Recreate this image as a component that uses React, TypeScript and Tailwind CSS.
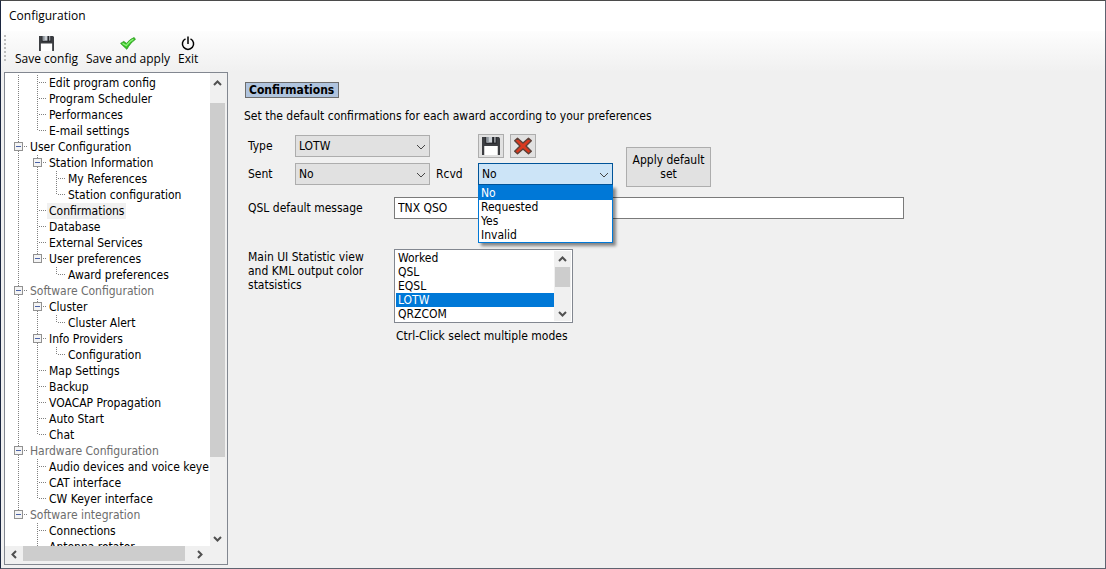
import { ReactNode } from "react";

type Guide = "line" | "tee" | "end" | "box" | "boxEnd" | "blank";

type TreeRow = {
  label: string;
  guides: Guide[];
  muted?: boolean;
  selected?: boolean;
};

const treeRows: TreeRow[] = [
  { label: "Edit program config", guides: ["line", "tee"] },
  { label: "Program Scheduler", guides: ["line", "tee"] },
  { label: "Performances", guides: ["line", "tee"] },
  { label: "E-mail settings", guides: ["line", "end"] },
  { label: "User Configuration", guides: ["box"] },
  { label: "Station Information", guides: ["line", "box"] },
  { label: "My References", guides: ["line", "line", "tee"] },
  { label: "Station configuration", guides: ["line", "line", "end"] },
  { label: "Confirmations", guides: ["line", "tee"], selected: true },
  { label: "Database", guides: ["line", "tee"] },
  { label: "External Services", guides: ["line", "tee"] },
  { label: "User preferences", guides: ["line", "boxEnd"] },
  { label: "Award preferences", guides: ["line", "blank", "end"] },
  { label: "Software Configuration", guides: ["box"], muted: true },
  { label: "Cluster", guides: ["line", "box"] },
  { label: "Cluster Alert", guides: ["line", "line", "end"] },
  { label: "Info Providers", guides: ["line", "box"] },
  { label: "Configuration", guides: ["line", "line", "end"] },
  { label: "Map Settings", guides: ["line", "tee"] },
  { label: "Backup", guides: ["line", "tee"] },
  { label: "VOACAP Propagation", guides: ["line", "tee"] },
  { label: "Auto Start", guides: ["line", "tee"] },
  { label: "Chat", guides: ["line", "end"] },
  { label: "Hardware Configuration", guides: ["box"], muted: true },
  { label: "Audio devices and voice keye", guides: ["line", "tee"] },
  { label: "CAT interface", guides: ["line", "tee"] },
  { label: "CW Keyer interface", guides: ["line", "end"] },
  { label: "Software integration", guides: ["boxEnd"], muted: true },
  { label: "Connections", guides: ["blank", "tee"] },
  { label: "Antenna rotator", guides: ["blank", "tee"] },
];

const GuideCell = ({ type }: { type: Guide }) => {
  const isBox = type === "box" || type === "boxEnd";
  const toBottom = type === "line" || type === "tee" || type === "box";
  return (
    <svg width="19" height="16" className="shrink-0" shapeRendering="crispEdges">
      <g stroke="#808080" strokeDasharray="1 1">
        {type !== "blank" && (
          <path d={toBottom ? "M9.5 0V16" : "M9.5 0V8"} />
        )}
        {type !== "blank" && type !== "line" && <path d="M11 7.5H18" />}
      </g>
      {isBox && (
        <g>
          <rect x="5.5" y="3.5" width="8" height="8" fill="#f4f4f4" stroke="#919191" />
          <path d="M7 7.5H12" stroke="#4b63a7" />
        </g>
      )}
    </svg>
  );
};

type Direction = "up" | "down" | "left" | "right";

const arrows: Record<Direction, string> = {
  up: "M1 6L4.5 2.5L8 6",
  down: "M1 3L4.5 6.5L8 3",
  left: "M6 1L2.5 4.5L6 8",
  right: "M3 1L6.5 4.5L3 8",
};

const ScrollArrow = ({ direction }: { direction: Direction }) => (
  <button
    type="button"
    aria-label={`Scroll ${direction}`}
    className="flex h-4 w-[15px] shrink-0 items-center justify-center"
  >
    <svg width="9" height="9" fill="none" stroke="#505050" strokeWidth="2">
      <path d={arrows[direction]} />
    </svg>
  </button>
);

const FloppyIcon = ({ size }: { size: number }) => (
  <svg width={size} height={size} viewBox="0 0 16 16">
    <path d="M0 0H15L16 1V16H0Z" fill="#3c3e42" />
    <rect x="3" y="0" width="10" height="6" fill="#23252a" />
    <rect x="4" y="0" width="5" height="5" fill="#c9ced3" />
    <rect x="4" y="0" width="2" height="5" fill="#8f969d" />
    <rect x="11" y="0" width="1" height="5" fill="#c9ced3" />
    <rect x="2" y="8" width="12" height="8" fill="#fff" />
  </svg>
);

const CheckIcon = () => (
  <svg width="16" height="13" viewBox="0 0 16 13">
    <path
      d="M0.6 6.4L3.8 4.4L6.5 6.4C8.5 4 11 1.8 14.2 0.6L15.4 2.4C12 4.6 9.3 8 6.8 12.3Z"
      fill="#35c322"
      stroke="#2b9420"
      strokeWidth="0.8"
    />
    <path
      d="M2.5 6.3L6.3 8.6C8.5 5.6 10.5 3.7 13.4 2.2"
      fill="none"
      stroke="#8cf07a"
      strokeWidth="1.4"
    />
  </svg>
);

const PowerIcon = () => (
  <svg width="14" height="15" viewBox="0 0 14 15" fill="none" stroke="#000" strokeWidth="1.5">
    <path d="M4.5 2.8A5.6 5.6 0 1 0 9.5 2.8M7 0.5V8" />
  </svg>
);

const CrossIcon = () => (
  <svg width="20" height="18" viewBox="0 0 20 18" fill="none" strokeLinejoin="round">
    <path
      d="M4.5 1.2L10 6L15.5 1.2L18.3 3.8L13 9L18.3 14.2L15.5 16.8L10 12L4.5 16.8L1.7 14.2L7 9L1.7 3.8Z"
      fill="#d9391f"
      stroke="#5b4038"
      strokeWidth="1.4"
    />
  </svg>
);

const ToolButton = ({ icon, label }: { icon: ReactNode; label: string }) => (
  <button type="button" className="flex flex-col items-center">
    <span className="flex h-4 items-center">{icon}</span>
    <span className="leading-4">{label}</span>
  </button>
);

type ComboProps = {
  id: string;
  options: string[];
  open?: boolean;
};

const Combo = ({ id, options, open }: ComboProps) => (
  <div className="relative w-[135px]">
    <select
      id={id}
      className={`block h-[22px] w-full appearance-none border pl-[3px] ${
        open ? "border-[#005499] bg-[#cce4f7]" : "border-[#adadad] bg-[#e1e1e1]"
      }`}
    >
      {options.map((option) => (
        <option key={option}>{option}</option>
      ))}
    </select>
    <svg
      width="10"
      height="6"
      className="pointer-events-none absolute top-[9px] right-1"
      fill="none"
      stroke="#444"
    >
      <path d="M1 1L5 5L9 1" />
    </svg>
    {open && (
      <ul
        role="listbox"
        className="absolute top-full left-0 z-10 w-full border border-[#0078d7] bg-white leading-[14px] shadow-[3px_3px_3px_rgba(0,0,0,0.45)]"
      >
        {options.map((option, i) => (
          <li
            key={option}
            role="option"
            aria-selected={i === 0}
            className={`px-[2px] ${i === 0 ? "bg-[#0078d7] text-white" : ""}`}
          >
            {option}
          </li>
        ))}
      </ul>
    )}
  </div>
);

const ConfigTree = () => (
  <aside className="flex w-[224px] shrink-0 flex-col border border-[#828790] bg-white">
    <div className="flex min-h-0 flex-1">
      <div className="min-w-0 flex-1 overflow-hidden pt-[2px] pl-1">
        {treeRows.map((row, i) => (
          <div key={i} className="flex h-4 leading-4 whitespace-nowrap">
            {row.guides.map((guide, j) => (
              <GuideCell key={j} type={guide} />
            ))}
            <span
              className={`px-[2px] ${row.muted ? "text-[#6d6d6d]" : ""} ${
                row.selected ? "bg-[#f0f0f0]" : ""
              }`}
            >
              {row.label}
            </span>
          </div>
        ))}
      </div>
      <div className="flex w-[17px] flex-col bg-[#f0f0f0] pt-[2px]">
        <ScrollArrow direction="up" />
        <div className="flex-1 pt-3">
          <div className="h-[83%] w-[15px] bg-[#cdcdcd]" />
        </div>
        <ScrollArrow direction="down" />
      </div>
    </div>
    <div className="flex h-[18px] bg-[#f0f0f0] pl-[2px]">
      <ScrollArrow direction="left" />
      <div className="flex-1 pl-px">
        <div className="h-[15px] w-[96%] bg-[#cdcdcd]" />
      </div>
      <ScrollArrow direction="right" />
      <div className="w-5" />
    </div>
  </aside>
);

const Confirmations = () => (
  <main className="flex-1 pt-[10px] pl-4">
    <h1 className="ml-px w-fit border border-[#6d6d6d] bg-[#b0c4de] pr-1 pl-[3px] text-[12px] leading-[14px] font-bold">
      Confirmations
    </h1>
    <p className="mt-[10px] leading-4">
      Set the default confirmations for each award according to your preferences
    </p>
    <form className="mt-[10px] pl-1">
      <div className="flex items-end gap-[13px]">
        <div className="flex flex-col gap-1 pb-px">
          <div className="flex h-6 items-center">
            <label htmlFor="type" className="w-[47px]">
              Type
            </label>
            <Combo id="type" options={["LOTW", "QSL", "EQSL"]} />
            <div className="ml-12 flex gap-[6px]">
              <button
                type="button"
                aria-label="Save"
                className="flex h-6 w-[26px] items-center justify-center border border-[#adadad] bg-[#e1e1e1]"
              >
                <FloppyIcon size={18} />
              </button>
              <button
                type="button"
                aria-label="Delete"
                className="flex h-6 w-[26px] items-center justify-center border border-[#adadad] bg-[#e1e1e1]"
              >
                <CrossIcon />
              </button>
            </div>
          </div>
          <div className="flex h-6 items-center">
            <label htmlFor="sent" className="w-[47px]">
              Sent
            </label>
            <Combo id="sent" options={["No", "Requested", "Yes"]} />
            <label htmlFor="rcvd" className="w-12 pl-[6px]">
              Rcvd
            </label>
            <Combo id="rcvd" options={["No", "Requested", "Yes", "Invalid"]} open />
          </div>
        </div>
        <button
          type="button"
          className="h-10 w-[85px] border border-[#adadad] bg-[#e1e1e1] px-1 leading-[14px]"
        >
          Apply default set
        </button>
      </div>
      <div className="mt-[10px] flex items-center">
        <label htmlFor="message" className="w-[146px]">
          QSL default message
        </label>
        <input
          id="message"
          defaultValue="TNX QSO"
          className="h-[22px] w-[510px] border border-[#7a7a7a] bg-white px-[3px]"
        />
      </div>
      <div className="mt-[30px] flex">
        <label htmlFor="statistics" className="w-[146px] pt-px pr-4 leading-[14px]">
          Main UI Statistic view and KML output color statsistics
        </label>
        <div>
          <div className="flex h-[74px] w-[179px] border border-[#828790] bg-white p-px">
            <select
              id="statistics"
              multiple
              size={5}
              defaultValue={["LOTW"]}
              className="min-w-0 flex-1 overflow-hidden [scrollbar-width:none]"
            >
              {["Worked", "QSL", "EQSL", "LOTW", "QRZCOM"].map((mode) => (
                <option
                  key={mode}
                  className="h-[14px] min-h-[14px] px-[2px] py-0 leading-[14px] checked:bg-[#0078d7] checked:bg-linear-to-r checked:from-[#0078d7] checked:to-[#0078d7] checked:text-white"
                >
                  {mode}
                </option>
              ))}
            </select>
            <div className="flex w-[17px] flex-col bg-[#f0f0f0] pl-px">
              <ScrollArrow direction="up" />
              <div className="flex-1">
                <div className="h-5 w-[15px] bg-[#cdcdcd]" />
              </div>
              <ScrollArrow direction="down" />
            </div>
          </div>
          <p className="mt-[5px] pl-[2px] leading-4">Ctrl-Click select multiple modes</p>
        </div>
      </div>
    </form>
  </main>
);

export default function App() {
  return (
    <div className="flex h-screen flex-col border border-t-[#4b4b4b] border-r-[#5f6370] border-b-[#5f6370] border-l-[#1c2740] bg-[#f0f0f0] font-['DejaVu_Sans_Condensed','DejaVu_Sans',sans-serif] text-[12px] text-black">
      <header className="bg-white px-2 font-['Open_Sans',sans-serif] leading-[30px]">
        Configuration
      </header>
      <div
        role="toolbar"
        className="flex h-[41px] bg-linear-to-b from-[#fdfdfd] to-[#f0f0f0] pt-1 pl-[3px] font-['Open_Sans',sans-serif]"
      >
        <div className="h-[26px] border-l-2 border-dotted border-[#bdbdbd]" />
        <div className="flex items-start gap-2 pl-[9px]">
          <ToolButton icon={<FloppyIcon size={15} />} label="Save config" />
          <ToolButton icon={<CheckIcon />} label="Save and apply" />
          <ToolButton icon={<PowerIcon />} label="Exit" />
        </div>
      </div>
      <div className="flex min-h-0 flex-1 pb-[3px] pl-[3px]">
        <ConfigTree />
        <Confirmations />
      </div>
    </div>
  );
}
